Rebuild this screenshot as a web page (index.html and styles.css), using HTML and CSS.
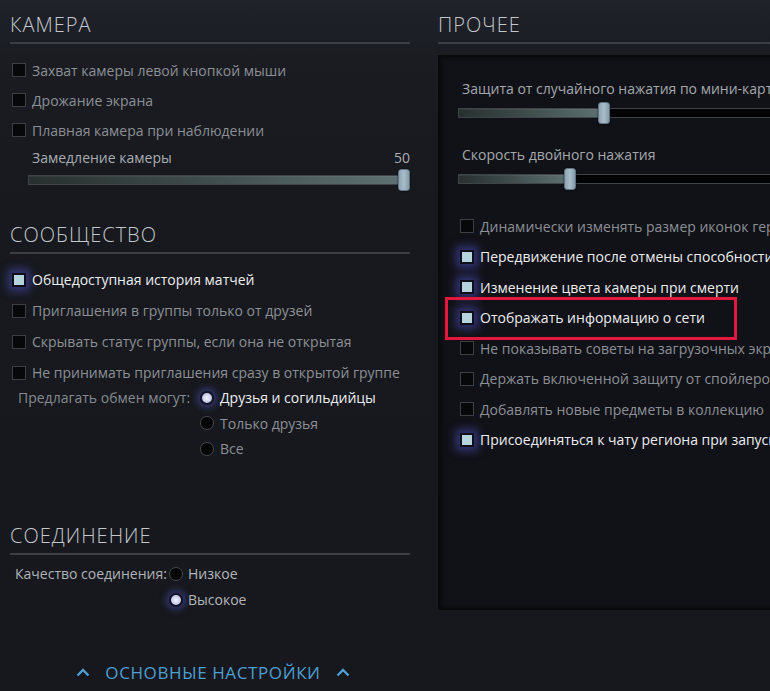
FILE: index.html
```html
<!DOCTYPE html>
<html lang="ru">
<head>
<meta charset="utf-8">
<title>Настройки</title>
<link rel="stylesheet" href="styles.css">
</head>
<body>
<div class="page">
  <div class="col left">
    <section class="sec camera">
      <h2 class="sec-title">КАМЕРА</h2>
      <div class="rows">
        <div class="cb-row"><span class="cb"></span><span class="lbl">Захват камеры левой кнопкой мыши</span></div>
        <div class="cb-row"><span class="cb"></span><span class="lbl">Дрожание экрана</span></div>
        <div class="cb-row"><span class="cb"></span><span class="lbl">Плавная камера при наблюдении</span></div>
      </div>
      <div class="slider-head"><span>Замедление камеры</span><span>50</span></div>
      <div class="slider" style="--p:1"><div class="track"><div class="fill"></div></div><div class="knob"></div></div>
    </section>

    <section class="sec community">
      <h2 class="sec-title">СООБЩЕСТВО</h2>
      <div class="rows rows31">
        <div class="cb-row on"><span class="cb"></span><span class="lbl">Общедоступная история матчей</span></div>
        <div class="cb-row"><span class="cb"></span><span class="lbl">Приглашения в группы только от друзей</span></div>
        <div class="cb-row"><span class="cb"></span><span class="lbl">Скрывать статус группы, если она не открытая</span></div>
        <div class="cb-row"><span class="cb"></span><span class="lbl">Не принимать приглашения сразу в открытой группе</span></div>
      </div>
      <div class="radio-group trade">
        <div class="rg-label">Предлагать обмен могут:</div>
        <div class="rg-opts">
          <div class="rd-row on"><span class="rd"></span><span>Друзья и согильдийцы</span></div>
          <div class="rd-row"><span class="rd"></span><span>Только друзья</span></div>
          <div class="rd-row"><span class="rd"></span><span>Все</span></div>
        </div>
      </div>
    </section>

    <section class="sec connection">
      <h2 class="sec-title">СОЕДИНЕНИЕ</h2>
      <div class="radio-group conn">
        <div class="rg-label">Качество соединения:</div>
        <div class="rg-opts">
          <div class="rd-row"><span class="rd"></span><span>Низкое</span></div>
          <div class="rd-row on"><span class="rd"></span><span>Высокое</span></div>
        </div>
      </div>
    </section>

    <div class="footer">
      <svg class="chev" width="14" height="9" viewBox="0 0 14 9"><polyline points="1.5,7.5 7,2 12.5,7.5" fill="none" stroke="#4e9fd2" stroke-width="2.4"/></svg>
      <span class="footer-text">ОСНОВНЫЕ НАСТРОЙКИ</span>
      <svg class="chev" width="14" height="9" viewBox="0 0 14 9"><polyline points="1.5,7.5 7,2 12.5,7.5" fill="none" stroke="#4e9fd2" stroke-width="2.4"/></svg>
    </div>
  </div>

  <div class="col right">
    <h2 class="sec-title">ПРОЧЕЕ</h2>
    <div class="panel">
      <div class="p-label">Защита от случайного нажатия по мини-карте</div>
      <div class="slider" style="--p:0.4294"><div class="track"><div class="fill"></div></div><div class="knob"></div></div>
      <div class="p-label second">Скорость двойного нажатия</div>
      <div class="slider" style="--p:0.325"><div class="track"><div class="fill"></div></div><div class="knob"></div></div>
      <div class="rows prow">
        <div class="cb-row"><span class="cb"></span><span class="lbl">Динамически изменять размер иконок героев</span></div>
        <div class="cb-row on"><span class="cb"></span><span class="lbl">Передвижение после отмены способности</span></div>
        <div class="cb-row on"><span class="cb"></span><span class="lbl">Изменение цвета камеры при смерти</span></div>
        <div class="cb-row on marked"><span class="cb"></span><span class="lbl">Отображать информацию о сети</span><span class="mark"></span></div>
        <div class="cb-row"><span class="cb"></span><span class="lbl">Не показывать советы на загрузочных экранах</span></div>
        <div class="cb-row"><span class="cb"></span><span class="lbl">Держать включенной защиту от спойлеров</span></div>
        <div class="cb-row"><span class="cb"></span><span class="lbl">Добавлять новые предметы в коллекцию</span></div>
        <div class="cb-row on"><span class="cb"></span><span class="lbl">Присоединяться к чату региона при запуске</span></div>
      </div>
    </div>
  </div>
</div>
</body>
</html>
```

FILE: styles.css
```css
* { box-sizing: border-box; }
html, body {
  margin: 0;
  width: 770px;
  height: 691px;
  overflow: hidden;
}
body {
  background: linear-gradient(180deg, #20222a 0px, #1a1c22 60px, #17191e 200px, #16181d 100%);
  font-family: "Open Sans", "Noto Sans", sans-serif;
  font-size: 14px;
  color: #8c9096;
}
.page {
  display: flex;
  gap: 28px;
  padding-left: 10px;
}
.col.left { width: 400px; flex: none; }
.col.right { width: 360px; flex: none; overflow: hidden; }

.sec-title {
  margin: 0;
  padding-top: 13px;
  padding-bottom: 5px;
  line-height: 24px;
  font-size: 20px;
  font-weight: 300;
  letter-spacing: 1px;
  color: #c3c7cc;
  border-bottom: 2px solid #3b3e45;
}
.community .sec-title { padding-top: 32px; }
.connection .sec-title { padding-top: 62px; }

.rows { margin-top: 11px; }
.rows31 { margin-top: 10px; }
.cb-row {
  height: 30px;
  display: flex;
  align-items: center;
  white-space: nowrap;
}
.rows31 .cb-row { height: 31px; }
.cb {
  flex: none;
  width: 14px;
  height: 14px;
  margin-left: 2px;
  margin-right: 6px;
  border: 1px solid #3c3e43;
  background: #07080a;
}
.cb-row.on { color: #eceef1; }
.cb-row.on .cb {
  border: 2.5px solid #0e0f1a;
  background: #b4d3dd;
  box-shadow: 0 0 8px 4px rgba(80, 80, 200, 0.55);
}

.slider-head {
  display: flex;
  justify-content: space-between;
  padding-left: 22px;
  line-height: 26px;
  height: 26px;
  color: #a9adb2;
}
.slider {
  position: relative;
  height: 22px;
  display: flex;
  align-items: center;
}
.camera .slider { margin-left: 18px; margin-top: -2px; }
.track {
  flex: 1;
  height: 10px;
  background: #040405;
  border: 1px solid #3f4448;
  box-shadow: inset 0 0 2px #000;
}
.fill {
  height: 100%;
  width: calc((100% - 12px) * var(--p) + 6px);
  background: linear-gradient(90deg, #27302f 0%, #3e4b4b 45%, #5f7172 100%);
  box-shadow: inset 0 1px 0 rgba(255,255,255,0.06);
}
.knob {
  position: absolute;
  top: 0;
  left: calc((100% - 12px) * var(--p));
  width: 12px;
  height: 22px;
  border-radius: 3px;
  background: linear-gradient(90deg, #8ea4b2 0%, #a9bdc9 50%, #8399a8 100%);
  border: 1px solid #5f7382;
  box-shadow: 0 0 2px rgba(0,0,0,0.8);
}

.radio-group { display: flex; }
.trade { margin-top: -3px; }
.trade .rg-label { width: 190px; padding-left: 8px; }
.conn { margin-top: 6px; }
.conn .rg-label { width: 159px; padding-left: 5px; color: #b0b4b9; line-height: 26px; }
.rg-label { line-height: 25.5px; white-space: nowrap; color: #868a90; }
.rd-row {
  display: flex;
  align-items: center;
  gap: 6px;
  height: 25.5px;
  color: #8c9096;
}
.conn .rd-row { height: 26px; gap: 5px; color: #b3b7bc; }
.trade .rd-row.on { color: #eceef1; }
.rd {
  flex: none;
  width: 14px;
  height: 14px;
  border-radius: 50%;
  border: 1.5px solid #45484d;
  background: #050506;
}
.rd-row.on .rd {
  border: 2.5px solid #14152a;
  background: radial-gradient(circle, #f4f5ff 0%, #d3d7ef 45%, #a9aed0 100%);
  box-shadow: 0 0 7px 3px rgba(88, 88, 200, 0.5);
}

.footer {
  margin-top: 48px;
  height: 24px;
  display: flex;
  align-items: center;
  justify-content: center;
  gap: 15px;
  padding-left: 6px;
}
.footer-text {
  font-size: 17px;
  letter-spacing: 0.6px;
  color: #4e9fd2;
  line-height: 24px;
}

.panel {
  margin-top: 11px;
  height: 555px;
  background: #111217;
  border: 2px solid #090a0c;
  box-shadow: inset 0 0 6px rgba(0,0,0,0.6);
  padding: 20px 0 0 18px;
}
.p-label {
  line-height: 24px;
  height: 24px;
  padding-left: 4px;
  white-space: nowrap;
  color: #a4a8ad;
}
.panel .slider { margin-top: 1px; }
.p-label.second { margin-top: 19px; }
.prow { margin-top: 21px; }
.prow .cb-row { height: 30.5px; }
.marked { position: relative; }
.mark {
  position: absolute;
  left: -13px;
  top: -6px;
  width: 292px;
  height: 43px;
  border: 3px solid #e5173f;
  pointer-events: none;
}
```
